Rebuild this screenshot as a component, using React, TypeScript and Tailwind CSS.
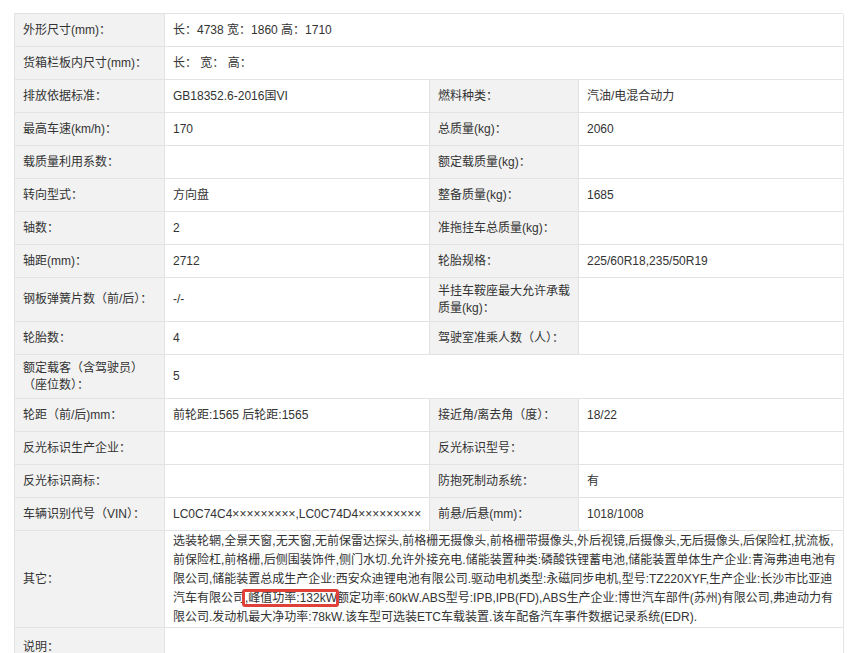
import React from "react";

type Row = { h: number; l: string; v?: string; l2?: string; v2?: string; full?: boolean };

const rows: Row[] = [
  { h: 33, l: "外形尺寸(mm)：", v: "长：4738 宽：1860 高：1710", full: true },
  { h: 33, l: "货箱栏板内尺寸(mm)：", v: "长：  宽：  高：", full: true },
  { h: 33, l: "排放依据标准：", v: "GB18352.6-2016国VI", l2: "燃料种类：", v2: "汽油/电混合动力" },
  { h: 33, l: "最高车速(km/h)：", v: "170", l2: "总质量(kg)：", v2: "2060" },
  { h: 33, l: "载质量利用系数：", v: "", l2: "额定载质量(kg)：", v2: "" },
  { h: 33, l: "转向型式：", v: "方向盘", l2: "整备质量(kg)：", v2: "1685" },
  { h: 33, l: "轴数：", v: "2", l2: "准拖挂车总质量(kg)：", v2: "" },
  { h: 33, l: "轴距(mm)：", v: "2712", l2: "轮胎规格：", v2: "225/60R18,235/50R19" },
  { h: 44, l: "钢板弹簧片数（前/后）：", v: "-/-", l2: "半挂车鞍座最大允许承载质量(kg)：", v2: "" },
  { h: 33, l: "轮胎数：", v: "4", l2: "驾驶室准乘人数（人）：", v2: "" },
  { h: 44, l: "额定载客（含驾驶员）（座位数）：", v: "5", full: true },
  { h: 33, l: "轮距（前/后)mm：", v: "前轮距:1565 后轮距:1565", l2: "接近角/离去角（度）：", v2: "18/22" },
  { h: 33, l: "反光标识生产企业：", v: "", l2: "反光标识型号：", v2: "" },
  { h: 33, l: "反光标识商标：", v: "", l2: "防抱死制动系统：", v2: "有" },
  { h: 33, l: "车辆识别代号（VIN）：", v: "LC0C74C4×××××××××,LC0C74D4×××××××××", l2: "前悬/后悬(mm)：", v2: "1018/1008" },
];

const cell = "border-r border-b border-[#e3e3e3] px-[8px] flex items-center text-[12px] leading-[17px]";

export default function App() {
  return (
    <div className="w-[852px] h-[653px] overflow-hidden bg-white pt-[13px] pl-[14px] text-[#333]" style={{ fontFamily: '"Liberation Sans","Noto Sans CJK SC",sans-serif' }}>
      <div className="w-[829px] border-t border-l border-[#e3e3e3]">
        {rows.map((r, i) => (
          <div key={i} className="grid grid-cols-[150px_265px_149px_265px]" style={{ height: r.h }}>
            <div className={`${cell} bg-[#f2f2f2]`}>{r.l}</div>
            {r.full ? (
              <div className={`${cell} col-span-3`}>{r.v}</div>
            ) : (
              <>
                <div className={cell}>{r.v}</div>
                <div className={`${cell} bg-[#f2f2f2]`}>{r.l2}</div>
                <div className={cell}>{r.v2}</div>
              </>
            )}
          </div>
        ))}
        <div className="grid grid-cols-[150px_679px] h-[97px]">
          <div className={`${cell} bg-[#f2f2f2]`}>其它：</div>
          <div className="border-r border-b border-[#e3e3e3] pl-[8px] pr-[6px] flex items-center text-[12px] leading-[19px]">
            <p>
              选装轮辋,全景天窗,无天窗,无前保雷达探头,前格栅无摄像头,前格栅带摄像头,外后视镜,后摄像头,无后摄像头,后保险杠,扰流板,前保险杠,前格栅,后侧围装饰件,侧门水切.允许外接充电.储能装置种类:磷酸铁锂蓄电池,储能装置单体生产企业:青海弗迪电池有限公司,储能装置总成生产企业:西安众迪锂电池有限公司.驱动电机类型:永磁同步电机,型号:TZ220XYF,生产企业:长沙市比亚迪汽车有限公司
              <span className="relative whitespace-nowrap">
                ,峰值功率:132kW
                <span className="absolute -left-[3px] -right-[2px] -top-[2px] -bottom-[2px] border-[3px] border-[#e0403a] rounded-[3px]"></span>
              </span>
              额定功率:60kW.ABS型号:IPB,IPB(FD),ABS生产企业:博世汽车部件(苏州)有限公司,弗迪动力有限公司.发动机最大净功率:78kW.该车型可选装ETC车载装置.该车配备汽车事件数据记录系统(EDR).
            </p>
          </div>
        </div>
        <div className="grid grid-cols-[150px_679px] h-[40px]">
          <div className={`${cell} bg-[#f2f2f2]`}>说明：</div>
          <div className={cell}></div>
        </div>
      </div>
    </div>
  );
}
